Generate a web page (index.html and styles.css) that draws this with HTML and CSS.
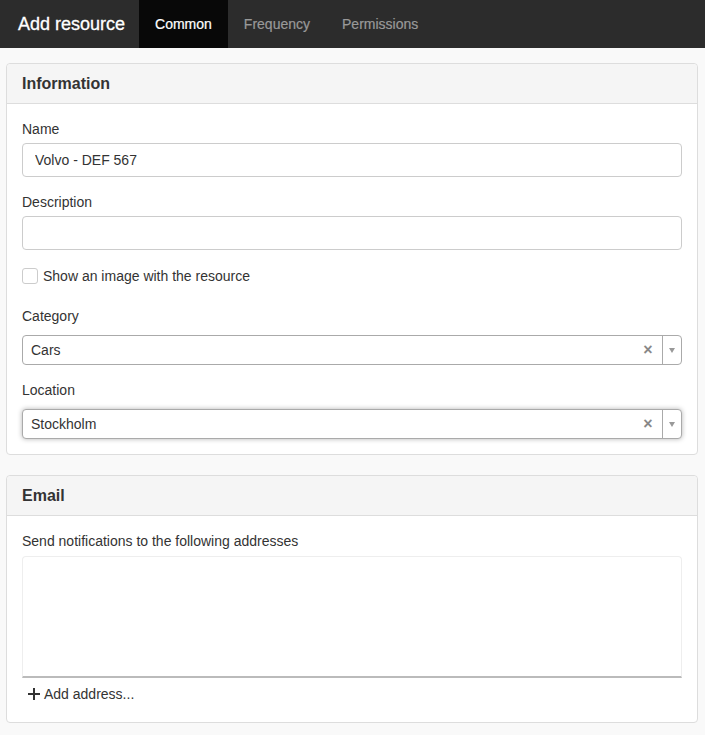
FILE: index.html
```html
<!DOCTYPE html>
<html lang="en">
  <head>
    <meta charset="UTF-8" />
    <meta name="viewport" content="width=device-width, initial-scale=1.0" />
    <title>Add resource</title>
    <link rel="stylesheet" href="styles.css">
  </head>
  <body>
    <!-- Top bar with title and tabs -->
    <nav class="navbar">
      <span class="brand">Add resource</span>
      <a class="tab active" href="#">Common</a>
      <a class="tab" href="#">Frequency</a>
      <a class="tab" href="#">Permissions</a>
    </nav>

    <div class="content">
      <div class="panel">
        <div class="panel-heading">Information</div>
        <div class="panel-body">
          <div class="form-group">
            <label class="label" for="name">Name</label>
            <input class="input" id="name" type="text" value="Volvo - DEF 567" />
          </div>
          <div class="form-group">
            <label class="label" for="description">Description</label>
            <input class="input" id="description" type="text" value="" />
          </div>
          <label class="checkbox">
            <span class="box"></span>
            Show an image with the resource
          </label>
          <div class="form-group">
            <div class="label">Category</div>
            <div class="select">
              <span class="select-value">Cars</span>
              <span class="select-clear">&times;</span>
              <span class="select-arrow"></span>
            </div>
          </div>
          <div class="form-group last">
            <div class="label">Location</div>
            <div class="select focused">
              <span class="select-value">Stockholm</span>
              <span class="select-clear">&times;</span>
              <span class="select-arrow"></span>
            </div>
          </div>
        </div>
      </div>

      <div class="panel">
        <div class="panel-heading">Email</div>
        <div class="panel-body">
          <div class="label">Send notifications to the following addresses</div>
          <div class="address-list"></div>
          <a class="add-link" href="#">
            <svg width="12" height="12" viewBox="0 0 12 12">
              <path d="M5 0h2v5h5v2H7v5H5V7H0V5h5z" fill="#333" />
            </svg>
            Add address...
          </a>
        </div>
      </div>
    </div>
  </body>
</html>
```

FILE: styles.css
```css
/* Page basics */
body {
  margin: 0;
  background-color: #f9f9f9;
  font-family: "Liberation Sans", Arial, sans-serif;
  font-size: 14px;
  line-height: 20px;
  color: #333;
}

/* Dark top bar */
.navbar {
  display: flex;
  align-items: stretch;
  height: 48px;
  background-color: #2c2c2c;
}

.brand {
  display: flex;
  align-items: center;
  padding: 0 14px 0 18px;
  font-size: 18px;
  color: #fff;
  -webkit-text-stroke: 0.3px #fff;
}

.tab {
  display: flex;
  align-items: center;
  padding: 0 16px;
  color: #999;
  text-decoration: none;
  -webkit-text-stroke: 0.2px currentColor;
}

.tab.active {
  background-color: #080808;
  color: #fff;
}

/* Panels */
.content {
  padding: 15px 7px 13px 6px;
}

.panel {
  margin-bottom: 20px;
  background-color: #fff;
  border: 1px solid #ddd;
  border-radius: 4px;
}

.panel-heading {
  padding: 10px 15px 9px;
  background-color: #f5f5f5;
  border-bottom: 1px solid #ddd;
  border-radius: 4px 4px 0 0;
  font-size: 16px;
  font-weight: bold;
}

.panel-body {
  padding: 15px;
}

/* Form fields */
.form-group {
  margin-bottom: 15px;
}

.form-group.last {
  margin-bottom: 0;
}

.label {
  display: block;
  margin-bottom: 4px;
}

.input {
  display: block;
  width: 100%;
  height: 34px;
  padding: 6px 12px;
  font-family: inherit;
  font-size: 14px;
  color: #333;
  border: 1px solid #ccc;
  border-radius: 4px;
  box-sizing: border-box;
}

.checkbox {
  display: flex;
  align-items: center;
  gap: 5px;
  margin-top: 16px;
  margin-bottom: 20px;
}

.box {
  width: 14px;
  height: 14px;
  border: 1px solid #ccc;
  border-radius: 3px;
  background-color: #fff;
}

/* Select boxes with clear button and arrow */
.select {
  display: flex;
  align-items: center;
  height: 30px;
  margin-top: 9px;
  border: 1px solid #aaa;
  border-radius: 4px;
  box-sizing: border-box;
  background-color: #fff;
}

.select.focused {
  box-shadow: 0 0 5px rgba(0, 0, 0, 0.3);
}

.select-value {
  flex: 1;
  padding-left: 8px;
}

.select-clear {
  width: 18px;
  margin-right: 5px;
  font-size: 16px;
  font-weight: bold;
  color: #888;
  text-align: center;
}

.select-arrow {
  display: flex;
  align-items: center;
  justify-content: center;
  align-self: stretch;
  width: 18px;
  border-left: 1px solid #aaa;
}

.select-arrow::after {
  content: "";
  border-top: 5px solid #999;
  border-left: 3px solid transparent;
  border-right: 3px solid transparent;
}

/* Email address list */
.address-list {
  height: 119px;
  margin-top: 5px;
  border: 1px solid #eee;
  border-bottom: 2px solid #bbb;
  border-radius: 4px 4px 0 0;
}

.add-link {
  display: flex;
  align-items: center;
  gap: 4px;
  margin: 6px 0 3px 6px;
  color: #333;
  text-decoration: none;
}
```
